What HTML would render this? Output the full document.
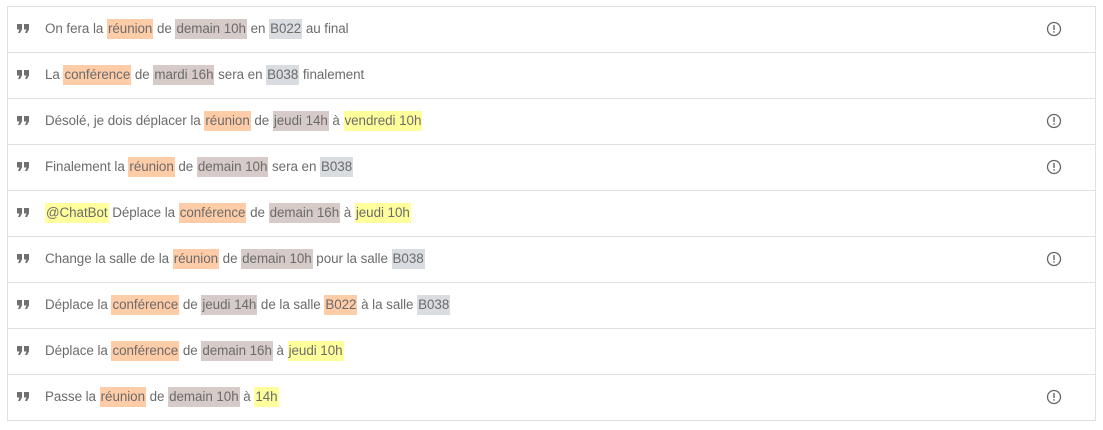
<!DOCTYPE html>
<html><head><meta charset="utf-8"><style>
html,body{margin:0;padding:0;background:#fff;width:1103px;height:430px;overflow:hidden}
.list{position:absolute;left:7px;top:6px;width:1087px;border:1px solid #e0e0e0;border-bottom:none}
.row{position:relative;height:45px;border-bottom:1px solid #e0e0e0;font-family:"Liberation Sans",sans-serif;font-size:13.4px;color:#6b6b6b;letter-spacing:-0.05px}
.q{position:absolute;left:9px;top:17px}
.t{position:absolute;left:37px;top:12px;line-height:20px;white-space:nowrap}
.t span{display:inline-block;height:20px;padding:0 1px}
.o{background:#ffcca8}.g{background:#d6cbc8}.b{background:#d9dde2}.y{background:#ffff9c}
.i{position:absolute;left:1038px;top:14px}
</style></head><body><div class="list">
<div class="row"><svg class="q" width="13" height="10" viewBox="0 0 13 10"><path d="M0 0h5v5.5l-2 3.5h-2l1.5-3.5h-2.5z M7 0h5v5.5l-2 3.5h-2l1.5-3.5h-2.5z" fill="#707070"/></svg><div class="t">On fera la <span class="o">réunion</span> de <span class="g">demain 10h</span> en <span class="b">B022</span> au final</div><svg class="i" width="16" height="16" viewBox="0 0 16 16"><circle cx="8" cy="8" r="6.5" fill="none" stroke="#666" stroke-width="1.3"/><rect x="7.3" y="4" width="1.4" height="5" fill="#666"/><rect x="7.3" y="10.2" width="1.4" height="1.5" fill="#666"/></svg></div>
<div class="row"><svg class="q" width="13" height="10" viewBox="0 0 13 10"><path d="M0 0h5v5.5l-2 3.5h-2l1.5-3.5h-2.5z M7 0h5v5.5l-2 3.5h-2l1.5-3.5h-2.5z" fill="#707070"/></svg><div class="t">La <span class="o">conférence</span> de <span class="g">mardi 16h</span> sera en <span class="b">B038</span> finalement</div></div>
<div class="row"><svg class="q" width="13" height="10" viewBox="0 0 13 10"><path d="M0 0h5v5.5l-2 3.5h-2l1.5-3.5h-2.5z M7 0h5v5.5l-2 3.5h-2l1.5-3.5h-2.5z" fill="#707070"/></svg><div class="t">Désolé, je dois déplacer la <span class="o">réunion</span> de <span class="g">jeudi 14h</span> à <span class="y">vendredi 10h</span></div><svg class="i" width="16" height="16" viewBox="0 0 16 16"><circle cx="8" cy="8" r="6.5" fill="none" stroke="#666" stroke-width="1.3"/><rect x="7.3" y="4" width="1.4" height="5" fill="#666"/><rect x="7.3" y="10.2" width="1.4" height="1.5" fill="#666"/></svg></div>
<div class="row"><svg class="q" width="13" height="10" viewBox="0 0 13 10"><path d="M0 0h5v5.5l-2 3.5h-2l1.5-3.5h-2.5z M7 0h5v5.5l-2 3.5h-2l1.5-3.5h-2.5z" fill="#707070"/></svg><div class="t">Finalement la <span class="o">réunion</span> de <span class="g">demain 10h</span> sera en <span class="b">B038</span></div><svg class="i" width="16" height="16" viewBox="0 0 16 16"><circle cx="8" cy="8" r="6.5" fill="none" stroke="#666" stroke-width="1.3"/><rect x="7.3" y="4" width="1.4" height="5" fill="#666"/><rect x="7.3" y="10.2" width="1.4" height="1.5" fill="#666"/></svg></div>
<div class="row"><svg class="q" width="13" height="10" viewBox="0 0 13 10"><path d="M0 0h5v5.5l-2 3.5h-2l1.5-3.5h-2.5z M7 0h5v5.5l-2 3.5h-2l1.5-3.5h-2.5z" fill="#707070"/></svg><div class="t"><span class="y">@ChatBot</span> Déplace la <span class="o">conférence</span> de <span class="g">demain 16h</span> à <span class="y">jeudi 10h</span></div></div>
<div class="row"><svg class="q" width="13" height="10" viewBox="0 0 13 10"><path d="M0 0h5v5.5l-2 3.5h-2l1.5-3.5h-2.5z M7 0h5v5.5l-2 3.5h-2l1.5-3.5h-2.5z" fill="#707070"/></svg><div class="t">Change la salle de la <span class="o">réunion</span> de <span class="g">demain 10h</span> pour la salle <span class="b">B038</span></div><svg class="i" width="16" height="16" viewBox="0 0 16 16"><circle cx="8" cy="8" r="6.5" fill="none" stroke="#666" stroke-width="1.3"/><rect x="7.3" y="4" width="1.4" height="5" fill="#666"/><rect x="7.3" y="10.2" width="1.4" height="1.5" fill="#666"/></svg></div>
<div class="row"><svg class="q" width="13" height="10" viewBox="0 0 13 10"><path d="M0 0h5v5.5l-2 3.5h-2l1.5-3.5h-2.5z M7 0h5v5.5l-2 3.5h-2l1.5-3.5h-2.5z" fill="#707070"/></svg><div class="t">Déplace la <span class="o">conférence</span> de <span class="g">jeudi 14h</span> de la salle <span class="o">B022</span> à la salle <span class="b">B038</span></div></div>
<div class="row"><svg class="q" width="13" height="10" viewBox="0 0 13 10"><path d="M0 0h5v5.5l-2 3.5h-2l1.5-3.5h-2.5z M7 0h5v5.5l-2 3.5h-2l1.5-3.5h-2.5z" fill="#707070"/></svg><div class="t">Déplace la <span class="o">conférence</span> de <span class="g">demain 16h</span> à <span class="y">jeudi 10h</span></div></div>
<div class="row"><svg class="q" width="13" height="10" viewBox="0 0 13 10"><path d="M0 0h5v5.5l-2 3.5h-2l1.5-3.5h-2.5z M7 0h5v5.5l-2 3.5h-2l1.5-3.5h-2.5z" fill="#707070"/></svg><div class="t">Passe la <span class="o">réunion</span> de <span class="g">demain 10h</span> à <span class="y">14h</span></div><svg class="i" width="16" height="16" viewBox="0 0 16 16"><circle cx="8" cy="8" r="6.5" fill="none" stroke="#666" stroke-width="1.3"/><rect x="7.3" y="4" width="1.4" height="5" fill="#666"/><rect x="7.3" y="10.2" width="1.4" height="1.5" fill="#666"/></svg></div>
</div></body></html>
